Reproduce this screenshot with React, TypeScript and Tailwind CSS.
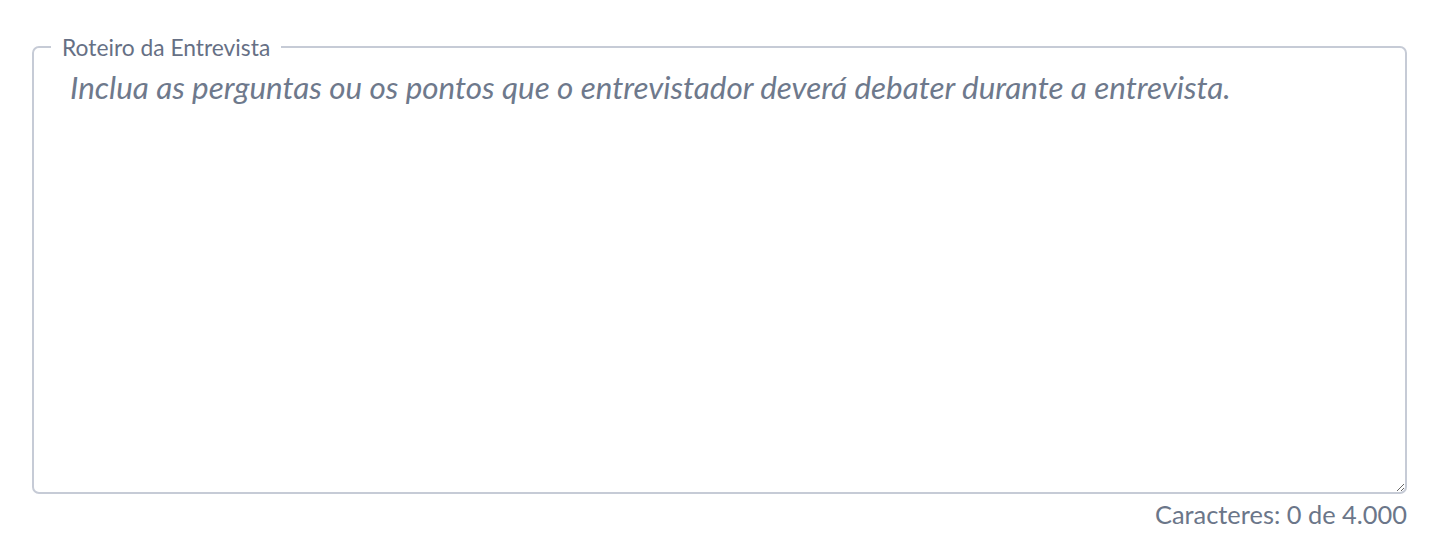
import { useState } from 'react';

const MAX_CHARS = 4000;

export default function App() {
  const [text, setText] = useState('');

  return (
    <div className="min-h-[540px] bg-white pl-[32px] pr-[27px] pt-[35px]" style={{ fontFamily: 'Lato, "Noto Sans", sans-serif' }}>
      <fieldset className="m-0 rounded-[7px] border-2 border-[#c6cbd6] p-0">
        <legend className="ml-[17px] px-[11px] text-[22.8px] leading-[24px] text-[#667085]">
          Roteiro da Entrevista
        </legend>
        <textarea
          value={text}
          onChange={(e) => setText(e.target.value.slice(0, MAX_CHARS))}
          placeholder="Inclua as perguntas ou os pontos que o entrevistador deverá debater durante a entrevista."
          className="block h-[433px] w-full resize-y bg-transparent pl-[36px] pr-[20px] pt-[8px] text-[31.4px] leading-[40px] text-[#374151] outline-none placeholder:italic placeholder:text-[#6e798c]"
        />
      </fieldset>
      <div className="mt-[5px] text-right text-[25.4px] leading-[30px] text-[#6b7689]">
        Caracteres: {text.length} de {MAX_CHARS.toLocaleString('pt-BR')}
      </div>
    </div>
  );
}
